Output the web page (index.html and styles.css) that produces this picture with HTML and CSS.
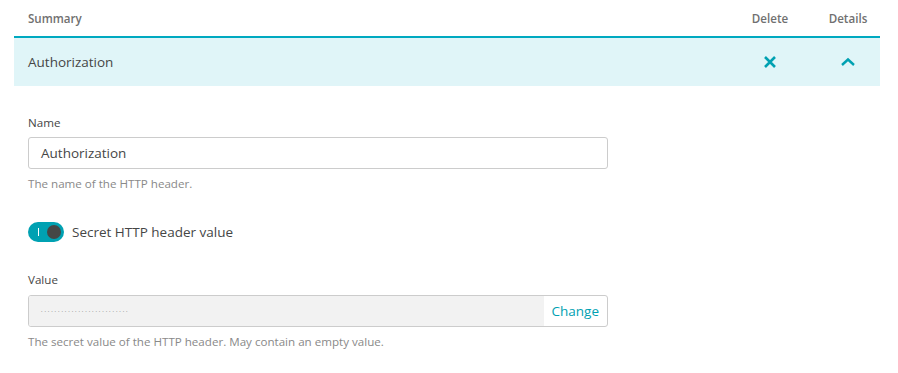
FILE: index.html
```html
<!DOCTYPE html>
<html>
<head>
<meta charset="utf-8">
<link rel="stylesheet" href="styles.css">
</head>
<body>
<div class="table">
  <div class="thead">
    <div class="col-summary">Summary</div>
    <div class="col-delete">Delete</div>
    <div class="col-details">Details</div>
  </div>
  <div class="row">
    <div class="col-summary row-title">Authorization</div>
    <div class="col-delete">
      <svg width="14" height="14" viewBox="0 0 14 14"><path d="M2 2 L12 12 M12 2 L2 12" stroke="#00a1b2" stroke-width="2.6" fill="none"/></svg>
    </div>
    <div class="col-details">
      <svg width="16" height="10" viewBox="0 0 16 10"><path d="M2 8 L8 2.5 L14 8" stroke="#00a1b2" stroke-width="2.4" fill="none"/></svg>
    </div>
  </div>
</div>
<div class="form">
  <div class="label">Name</div>
  <div class="input">Authorization</div>
  <div class="help">The name of the HTTP header.</div>
  <div class="toggle-row">
    <div class="toggle"><span class="toggle-bar"></span><span class="toggle-knob"></span></div>
    <span class="toggle-label">Secret HTTP header value</span>
  </div>
  <div class="label label-value">Value</div>
  <div class="input input-secret">
    <span class="dots">••••••••••••••••••••••••••</span>
    <span class="change">Change</span>
  </div>
  <div class="help">The secret value of the HTTP header. May contain an empty value.</div>
</div>
</body>
</html>
```
FILE: styles.css
```css
body {
  margin: 0;
  font-family: "Open Sans", "Lato", sans-serif;
  color: #454646;
  background: #fff;
}
.table {
  margin-left: 14px;
  width: 866px;
}
.thead {
  display: flex;
  align-items: center;
  height: 36px;
  font-size: 11.6px;
  font-weight: 600;
  color: #707070;
  border-bottom: 2px solid #00a9c0;
}
.col-summary {
  flex: 1;
  padding-left: 14px;
}
.col-delete {
  width: 92px;
  display: flex;
  justify-content: center;
}
.col-details {
  width: 64px;
  display: flex;
  justify-content: center;
}
.row {
  display: flex;
  align-items: center;
  height: 48px;
  background: #e0f5f8;
}
.row-title {
  font-size: 13.5px;
  color: #454646;
  padding-bottom: 1px;
}
.form {
  padding: 29px 0 0 28px;
  width: 580px;
}
.label {
  font-size: 11.6px;
  line-height: 16px;
  color: #454646;
}
.input {
  margin-top: 6px;
  height: 30px;
  border: 1px solid #cccccc;
  border-radius: 3px;
  padding-left: 12px;
  display: flex;
  align-items: center;
  font-size: 13.5px;
  color: #454646;
}
.help {
  margin-top: 7px;
  font-size: 11.6px;
  line-height: 16px;
  color: #898989;
}
.toggle-row {
  margin-top: 30px;
  display: flex;
  align-items: center;
  gap: 8px;
}
.toggle {
  position: relative;
  width: 36px;
  height: 20px;
  border-radius: 10px;
  background: #00a1b2;
}
.toggle-bar {
  position: absolute;
  left: 10px;
  top: 6px;
  width: 1px;
  height: 8px;
  background: #fff;
}
.toggle-knob {
  position: absolute;
  right: 3px;
  top: 3px;
  width: 14px;
  height: 14px;
  border-radius: 50%;
  background: #454646;
}
.toggle-label {
  font-size: 13.5px;
  color: #454646;
}
.label-value {
  margin-top: 30px;
}
.input-secret {
  margin-top: 7px;
  padding-left: 0;
  overflow: hidden;
}
.dots {
  flex: 1;
  align-self: stretch;
  background: #f2f2f2;
  padding-left: 12px;
  display: flex;
  align-items: center;
  font-size: 4px;
  letter-spacing: 1.9px;
  color: #a8a8a8;
}
.change {
  padding: 0 8px 0 8px;
  font-size: 13.5px;
  color: #00a1b2;
}
```
